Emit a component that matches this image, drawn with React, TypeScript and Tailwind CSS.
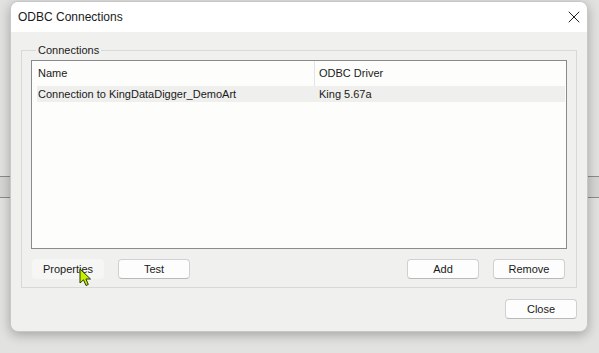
import { X } from "lucide-react";

const btn =
  "h-[20px] w-[72px] rounded-[4px] border border-[#d0d0d0] border-b-[#b8b8b8] bg-[#fdfdfd] text-[11px] leading-none text-[#1a1a1a]";

function Cursor() {
  return (
    <svg
      className="absolute left-[79px] top-[268px]"
      width="14"
      height="20"
      viewBox="0 0 14 20"
    >
      <path
        d="M1 1 L1 15 L4.5 11.8 L7 17.5 L9.3 16.5 L6.9 11 L11.5 11 Z"
        fill="#c4f000"
        stroke="#2a3a00"
        strokeWidth="1"
        strokeLinejoin="round"
      />
    </svg>
  );
}

export default function App() {
  return (
    <div
      className="relative h-[353px] w-[599px] overflow-hidden bg-[#e2e2e0]"
      style={{ fontFamily: '"Liberation Sans", Arial, sans-serif' }}
    >
      {/* window underneath */}
      <div className="h-[176px]" />
      <div className="h-[22px] border-y border-[#8c8c8c] bg-[#d6d6d4]" />

      {/* dialog */}
      <div className="absolute left-[10px] top-[1px] flex h-[331px] w-[578px] flex-col overflow-hidden rounded-[8px] border border-[#c8c8c8] bg-[#f0f0ee] shadow-[0_3px_12px_rgba(0,0,0,0.28)]">
        <div className="flex h-[30px] items-center justify-between bg-white pl-[7px] pr-[3px]">
          <span className="text-[12px] text-[#1a1a1a]">ODBC Connections</span>
          <X size={20} strokeWidth={1.2} className="text-[#222]" />
        </div>

        <fieldset className="mx-[10px] mt-[11px] border border-[#d8d8d6] px-[9px] pb-[8px]">
          <legend className="ml-[5px] px-[2px] text-[11px] leading-[14px] text-[#1a1a1a]">
            Connections
          </legend>

          <div className="mt-[3px] flex h-[189px] flex-col border border-[#8a8a8e] bg-[#fdfdfb] pl-[5px] pr-[1px]">
            <div className="flex h-[25px] items-center text-[11px] text-[#1a1a1a]">
              <div className="w-[277px] pl-[1px]">Name</div>
              <div className="h-full w-[1px] bg-[#e4e4e4]" />
              <div className="flex-1 pl-[4px]">ODBC Driver</div>
            </div>
            <div className="flex h-[16px] items-center bg-[#efefed] text-[11px] text-[#1a1a1a]">
              <div className="w-[278px] pl-[1px]">Connection to KingDataDigger_DemoArt</div>
              <div className="flex-1 pl-[4px]">King 5.67a</div>
            </div>
          </div>

          <div className="mt-[10px] flex items-center pl-[1px] pr-[2px]">
            <button className="h-[20px] w-[72px] rounded-[4px] bg-[#f6f6f5] text-[11px] leading-none text-[#1a1a1a]">
              Properties
            </button>
            <button className={`${btn} ml-[14px]`}>Test</button>
            <div className="flex-1" />
            <button className={btn}>Add</button>
            <button className={`${btn} ml-[14px]`}>Remove</button>
          </div>
        </fieldset>

        <div className="mr-[10px] mt-[11px] flex justify-end">
          <button className={btn}>Close</button>
        </div>
      </div>

      <Cursor />
    </div>
  );
}
